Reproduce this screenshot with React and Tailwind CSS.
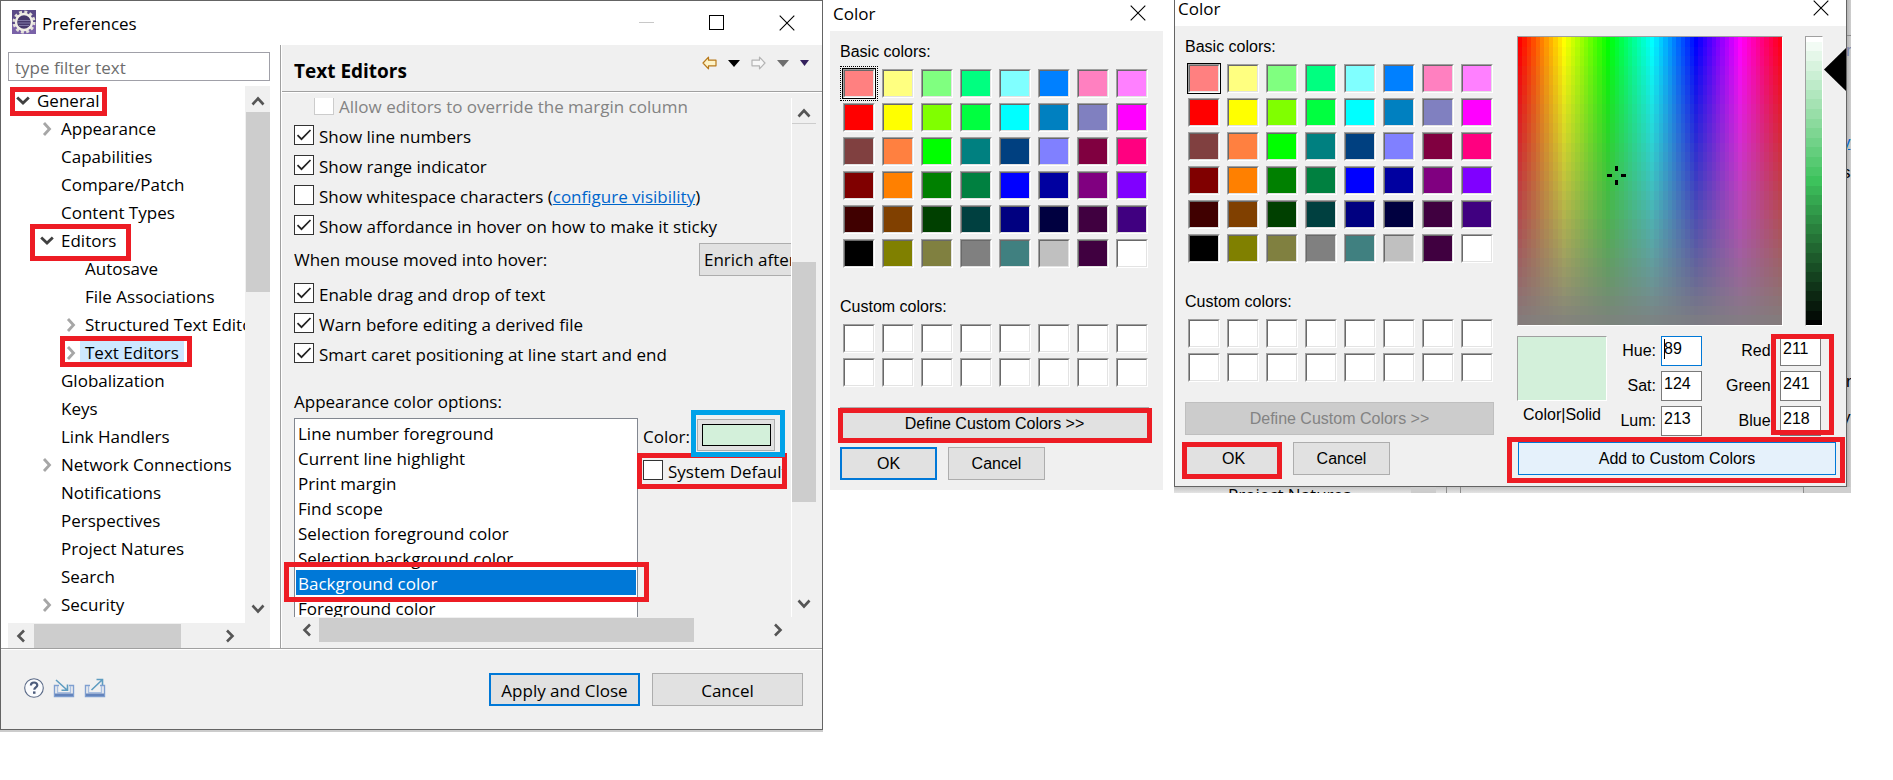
import React from 'react';
import clsx from 'clsx';

const TREE = [
  { label: 'General', level: 0, state: 'open', mark: 'left-[2px] top-0 w-[97px] h-[29px]' },
  { label: 'Appearance', level: 1, state: 'closed' },
  { label: 'Capabilities', level: 1 },
  { label: 'Compare/Patch', level: 1 },
  { label: 'Content Types', level: 1 },
  { label: 'Editors', level: 1, state: 'open', mark: 'left-[22px] -top-[3px] w-[101px] h-[37px]' },
  { label: 'Autosave', level: 2 },
  { label: 'File Associations', level: 2 },
  { label: 'Structured Text Editors', level: 2, state: 'closed' },
  { label: 'Text Editors', level: 2, state: 'closed', selected: true, mark: 'left-[52px] -top-[3px] w-[132px] h-[31px]' },
  { label: 'Globalization', level: 1 },
  { label: 'Keys', level: 1 },
  { label: 'Link Handlers', level: 1 },
  { label: 'Network Connections', level: 1, state: 'closed' },
  { label: 'Notifications', level: 1 },
  { label: 'Perspectives', level: 1 },
  { label: 'Project Natures', level: 1 },
  { label: 'Search', level: 1 },
  { label: 'Security', level: 1, state: 'closed' },
];

const INDENT = ['pl-[8px]', 'pl-[32px]', 'pl-[56px]'];

const COLOR_OPTIONS = [
  'Line number foreground',
  'Current line highlight',
  'Print margin',
  'Find scope',
  'Selection foreground color',
  'Selection background color',
  'Background color',
  'Foreground color',
];

const BASIC_COLORS = [
  '#ff8080', '#ffff80', '#80ff80', '#00ff80', '#80ffff', '#0080ff', '#ff80c0', '#ff80ff',
  '#ff0000', '#ffff00', '#80ff00', '#00ff40', '#00ffff', '#0080c0', '#8080c0', '#ff00ff',
  '#804040', '#ff8040', '#00ff00', '#008080', '#004080', '#8080ff', '#800040', '#ff0080',
  '#800000', '#ff8000', '#008000', '#008040', '#0000ff', '#0000a0', '#800080', '#8000ff',
  '#400000', '#804000', '#004000', '#004040', '#000080', '#000040', '#400040', '#400080',
  '#000000', '#808000', '#808040', '#808080', '#408080', '#c0c0c0', '#400040', '#ffffff',
];

const CUSTOM_COLORS = Array(16).fill('#ffffff');

const Mark = ({ className, blue }) => (
  <span
    className={clsx(
      'absolute z-10 border-[5px] pointer-events-none',
      blue ? 'border-[#00a2e8]' : 'border-[#ed1c24]',
      className
    )}
  />
);

const CloseIcon = () => (
  <svg className="w-4 h-4" viewBox="0 0 16 16" fill="none" stroke="#000" strokeWidth="1.1">
    <path d="M.7.7l14.6 14.6M15.3.7L.7 15.3" />
  </svg>
);

const EclipseIcon = () => (
  <svg className="w-6 h-6" viewBox="0 0 24 24">
    <rect width="24" height="24" fill="#5a4a86" />
    <rect y="14" width="24" height="10" fill="#7a62a8" />
    <circle cx="12" cy="12" r="10" fill="none" stroke="#e4e2da" strokeWidth="3" strokeDasharray="2.9 2.34" />
    <circle cx="12" cy="12" r="8" fill="#46386c" stroke="#f0eee6" strokeWidth="2.4" />
    <path d="M6 10.5h12M5.6 13h12.8M7 15.5h10" stroke="#7f78a6" strokeWidth="1" />
  </svg>
);

const Arrow = ({ dir }) => {
  const paths = {
    up: 'M1.5 10.5L7 4.5l5.5 6',
    down: 'M1.5 3.5L7 9.5l5.5-6',
    left: 'M10 1.5L4.5 7l5.5 5.5',
    right: 'M4 1.5L9.5 7 4 12.5',
  };
  return (
    <svg className="w-[14px] h-[14px]" viewBox="0 0 14 14" fill="none" stroke="#555" strokeWidth="2.6">
      <path d={paths[dir]} />
    </svg>
  );
};

const Chevron = ({ open }) => (
  <svg className="w-[14px] h-[14px]" viewBox="0 0 14 14" fill="none" strokeWidth="2.8">
    {open ? <path d="M1.2 3.5L7 9l5.8-5.5" stroke="#404040" /> : <path d="M4 1l5.5 6L4 13" stroke="#a6a6a6" />}
  </svg>
);

const Caret = ({ color, small }) => (
  <svg className={small ? 'w-[9px] h-[6px]' : 'w-[12px] h-[7px]'} viewBox="0 0 12 7" preserveAspectRatio="none">
    <path d="M0 0h12L6 7z" fill={color} />
  </svg>
);

const BlockArrow = ({ stroke, fill, flip }) => (
  <svg className="w-[15px] h-[14px]" viewBox="0 0 15 14" fill={fill} stroke={stroke} strokeWidth="1.2" strokeLinejoin="round">
    <path d={flip ? 'M14 7L8.5 1.2v3H1v5.6h7.5v3z' : 'M1 7l5.5-5.8v3H14v5.6H6.5v3z'} />
  </svg>
);

const Check = ({ label, checked, disabled, className, children }) => (
  <div className={clsx('flex items-center h-[30px]', className)}>
    <label className={clsx('flex items-center whitespace-nowrap', disabled && 'text-[#838383]')}>
      <span className="relative flex w-5 h-5 mr-[5px]">
        <input
          type="checkbox"
          defaultChecked={checked}
          disabled={disabled}
          className={clsx(
            'appearance-none w-5 h-5 bg-white border',
            disabled ? 'border-[#cccccc]' : 'border-[#333333]'
          )}
        />
        {checked && (
          <svg className="absolute left-0 top-0 w-5 h-5 pointer-events-none" viewBox="0 0 20 20" fill="none" stroke="#222" strokeWidth="1.7">
            <path d="M3.5 10.2l4 4L16.5 5" />
          </svg>
        )}
      </span>
      <span className="pt-[3px]">{label}</span>
    </label>
    {children}
  </div>
);

const PushButton = ({ primary, className, children, ...rest }) => (
  <button
    type="button"
    className={clsx(
      'flex items-center justify-center h-[33px] bg-[#e1e1e1]',
      primary ? 'border-2 border-[#0078d7]' : 'border border-[#adadad]',
      className
    )}
    {...rest}
  >
    {children}
  </button>
);

const PreferenceTree = () => (
  <aside className="w-[280px] shrink-0 flex flex-col bg-white border-r border-[#a0a0a0] pl-[7px] pr-[10px] pt-[7px]">
    <input
      type="text"
      aria-label="Filter preferences"
      placeholder="type filter text"
      className="w-full h-[29px] px-[6px] pt-px border border-[#a0a0a8] placeholder:text-[#6d6d6d] outline-none"
    />
    <div className="flex mt-[5px]">
      <div className="flex-1 min-w-0">
        <ul role="tree" aria-label="Preference pages" className="h-[537px] pt-px overflow-hidden">
          {TREE.map((item) => (
            <li
              key={item.label}
              role="treeitem"
              aria-selected={!!item.selected}
              className={clsx('relative flex items-center h-7 whitespace-nowrap', INDENT[item.level])}
            >
              <span className="flex w-[14px] shrink-0">{item.state && <Chevron open={item.state === 'open'} />}</span>
              <span className={clsx('ml-[2px] px-[5px] h-7 leading-7', item.selected && 'bg-[#cde8ff]')}>{item.label}</span>
              {item.mark && <Mark className={item.mark} />}
            </li>
          ))}
        </ul>
        <div className="flex items-center h-[25px] bg-[#f0f0f0]">
          <button type="button" aria-label="Scroll left" className="w-[26px] flex justify-center"><Arrow dir="left" /></button>
          <span className="w-[147px] h-6 bg-[#cdcdcd]" />
          <button type="button" aria-label="Scroll right" className="ml-auto w-[30px] flex justify-center"><Arrow dir="right" /></button>
        </div>
      </div>
      <div className="w-[25px] flex flex-col items-center bg-[#f0f0f0] pb-[26px]">
        <button type="button" aria-label="Scroll up" className="h-[26px] flex items-center pt-1"><Arrow dir="up" /></button>
        <span className="w-6 h-[180px] bg-[#cdcdcd]" />
        <button type="button" aria-label="Scroll down" className="mt-auto h-[26px] flex items-center"><Arrow dir="down" /></button>
      </div>
    </div>
  </aside>
);

const ColorOptions = () => (
  <div className="flex items-start mt-1">
    <ul role="listbox" aria-label="Appearance color options" className="w-[344px] shrink-0 bg-white border border-[#828790] p-px">
      {COLOR_OPTIONS.map((name) => {
        const selected = name === 'Background color';
        return (
          <li
            key={name}
            role="option"
            aria-selected={selected}
            className={clsx('relative h-[25px] leading-[27px] pl-[2px]', selected && 'bg-[#0078d7] text-white')}
          >
            {name}
            {selected && <Mark className="-left-[12px] -top-[8px] w-[365px] h-[40px]" />}
          </li>
        );
      })}
    </ul>
    <div className="ml-[5px] w-[144px] shrink-0">
      <div className="flex items-center mt-px">
        <span className="w-[54px] pt-[3px]">Color:</span>
        <button type="button" aria-label="Background color" className="relative z-20 flex items-center justify-center w-[78px] h-8 bg-[#e1e1e1] border border-[#adadad]">
          <span className="w-[69px] h-[22px] bg-[#d3f0da] border border-black" />
          <Mark blue className="-left-[7px] -top-[10px] w-[94px] h-[47px]" />
        </button>
      </div>
      <div className="relative mt-1">
        <Check label="System Default" className="w-[140px] overflow-hidden" />
        <Mark className="-left-[6px] -top-[2px] w-[150px] h-[36px]" />
      </div>
    </div>
  </div>
);

const TextEditorsPage = () => (
  <div className="flex-1 min-w-0 flex flex-col border-l border-white">
    <header className="flex justify-between h-[47px] pl-3 pr-[13px] border-b border-[#a0a0a0]">
      <h2 className="pt-[14px] text-[19px] leading-6 font-bold">Text Editors</h2>
      <div className="flex items-center gap-[11px] h-9">
        <button type="button" aria-label="Back"><BlockArrow stroke="#b8791a" fill="#fdf3c8" /></button>
        <button type="button" aria-label="Back history"><Caret color="#000" /></button>
        <button type="button" aria-label="Forward"><BlockArrow stroke="#b4b4b4" fill="#f7f7f7" flip /></button>
        <button type="button" aria-label="Forward history"><Caret color="#6e6e6e" /></button>
        <button type="button" aria-label="View menu"><Caret color="#33205c" small /></button>
      </div>
    </header>
    <div className="flex border-t border-white pt-[5px] pb-[6px] pr-[6px]">
      <div className="flex-1 min-w-0">
        <div className="h-[519px] pl-3 overflow-hidden border-r border-white">
          <div className="-mt-2">
            <Check label="Allow editors to override the margin column" disabled className="pl-5" />
            <Check label="Show line numbers" checked />
            <Check label="Show range indicator" checked />
            <Check label="Show whitespace characters (">
              <a href="#whitespace" className="pt-[3px] text-[#0066cc] underline">configure visibility</a>
              <span className="pt-[3px]">)</span>
            </Check>
            <Check label="Show affordance in hover on how to make it sticky" checked />
          </div>
          <div className="flex items-center justify-between mt-[3px]">
            <label htmlFor="hover-mode" className="pt-px">When mouse moved into hover:</label>
            <select
              id="hover-mode"
              className="appearance-none shrink-0 w-[160px] -mr-[68px] h-[33px] pl-1 pt-px bg-[#e1e1e1] border border-[#adadad]"
            >
              <option>Enrich after</option>
            </select>
          </div>
          <div className="mt-[2px]">
            <Check label="Enable drag and drop of text" checked />
            <Check label="Warn before editing a derived file" checked />
            <Check label="Smart caret positioning at line start and end" checked />
          </div>
          <p className="mt-[22px] leading-6">Appearance color options:</p>
          <ColorOptions />
        </div>
        <div className="flex items-center mt-px ml-3 h-6">
          <button type="button" aria-label="Scroll left" className="w-[25px] flex justify-center"><Arrow dir="left" /></button>
          <span className="w-[375px] h-6 bg-[#cdcdcd]" />
          <button type="button" aria-label="Scroll right" className="ml-auto w-[29px] flex justify-center"><Arrow dir="right" /></button>
        </div>
      </div>
      <div className="w-6 flex flex-col items-center pb-[25px]">
        <button type="button" aria-label="Scroll up" className="w-6 h-[26px] flex items-center justify-center pt-1 border-b border-[#cdcdcd]"><Arrow dir="up" /></button>
        <span className="mt-[138px] w-6 h-[240px] bg-[#cdcdcd]" />
        <button type="button" aria-label="Scroll down" className="mt-auto h-[26px] flex items-center"><Arrow dir="down" /></button>
      </div>
    </div>
  </div>
);

const PreferencesWindow = () => (
  <div className="border-b-2 border-[#cccccc]">
    <section className="border border-[#646464] bg-[#f0f0f0] text-[17px] leading-6">
      <header className="flex items-center h-11 pl-[11px] pr-[27px] bg-white">
        <span className="pb-[2px]"><EclipseIcon /></span>
        <h1 className="ml-[6px] pt-px">Preferences</h1>
        <div className="ml-auto flex items-center gap-[55px] pb-px">
          <button type="button" aria-label="Minimize" disabled><span className="block w-[15px] h-px bg-[#c8c8c8]" /></button>
          <button type="button" aria-label="Maximize"><span className="block w-[15px] h-[15px] border border-black" /></button>
          <button type="button" aria-label="Close"><CloseIcon /></button>
        </div>
      </header>
      <div className="flex">
        <PreferenceTree />
        <TextEditorsPage />
      </div>
      <footer className="border-t border-[#a0a0a0]">
        <div className="flex items-start justify-end pt-[23px] pb-[23px] pl-[23px] pr-[19px] border-t border-white">
          <div className="flex items-center gap-[9px] mr-auto h-[29px]">
            <button type="button" aria-label="Help">
              <svg className="w-5 h-5" viewBox="0 0 20 20" fill="none">
                <circle cx="10" cy="10" r="9.3" fill="#fafbfd" stroke="#5b6b88" strokeWidth="1.1" />
                <path d="M6.9 7.6c0-2 1.3-3.1 3.2-3.1s3.2 1.1 3.2 2.7c0 2.1-3 2.300-3 4.600" stroke="#4c5c7c" strokeWidth="2.2" />
                <rect x="9" y="13.4" width="2.5" height="2.4" fill="#4c5c7c" />
              </svg>
            </button>
            <button type="button" aria-label="Import">
              <svg className="w-[22px] h-5" viewBox="0 0 22 20" fill="none">
                <path d="M6 7.500H1.500v11h19v-11H16" stroke="#7f9fd0" strokeWidth="1.400" />
                <path d="M4.500 8v6.800h13V8" stroke="#a9bfe0" strokeWidth="1.400" />
                <path d="M2 16.800h18" stroke="#6484bc" strokeWidth="2.600" />
                <path d="M3 2l10.500 9.500M14.500 6.500v5.800H8.500" stroke="#5e9cc0" strokeWidth="1.600" />
              </svg>
            </button>
            <button type="button" aria-label="Export">
              <svg className="w-[22px] h-5" viewBox="0 0 22 20" fill="none">
                <path d="M6 7.500H1.500v11h19v-11H16" stroke="#7f9fd0" strokeWidth="1.400" />
                <path d="M4.500 8v6.800h13V8" stroke="#a9bfe0" strokeWidth="1.400" />
                <path d="M2 16.800h18" stroke="#6484bc" strokeWidth="2.600" />
                <path d="M7.500 12L18 2M12.500 1.500h6V7" stroke="#5e9cc0" strokeWidth="1.600" />
              </svg>
            </button>
          </div>
          <PushButton primary className="w-[151px] pt-[2px]">Apply and Close</PushButton>
          <PushButton className="ml-3 w-[151px] pt-[2px]">Cancel</PushButton>
        </div>
      </footer>
    </section>
  </div>
);

const Swatch = ({ color, selected, focused }) => (
  <button
    type="button"
    aria-label={color}
    className={clsx(
      'w-8 h-[29px] border border-t-[#a0a0a0] border-l-[#a0a0a0] border-r-white border-b-white',
      selected && 'ring-1 ring-black',
      focused && 'outline-1 outline-dotted outline-black outline-offset-2'
    )}
  >
    <span
      className="block w-full h-full border border-t-[#696969] border-l-[#696969] border-r-[#e3e3e3] border-b-[#e3e3e3]"
      style={{ backgroundColor: color }}
    />
  </button>
);

const Palette = ({ label, colors, focused }) => (
  <div>
    <p className="h-[22px]">{label}</p>
    <div className="grid grid-cols-[repeat(8,32px)] gap-x-[7px] gap-y-[5px] mt-[6px] ml-[3px]">
      {colors.map((color, i) => (
        <Swatch key={i} color={color} selected={color === '#ff8080'} focused={focused && i === 0} />
      ))}
    </div>
  </div>
);

const DialogTitle = () => (
  <div className="flex items-center h-[31px] pl-[3px] pr-[17px] pb-[6px] bg-white text-[17px]">
    <h2 className="pt-[2px]">Color</h2>
    <button type="button" aria-label="Close" className="ml-auto"><CloseIcon /></button>
  </div>
);

const PalettePanel = ({ expanded }) => (
  <div className={clsx('w-[319px] shrink-0 pl-[10px] pt-[10px]', expanded ? 'pb-[11px]' : 'pb-[10px]')}>
    <Palette label="Basic colors:" colors={BASIC_COLORS} focused={!expanded} />
    <div className="mt-7">
      <Palette label="Custom colors:" colors={CUSTOM_COLORS} />
    </div>
    <div className="relative mt-5">
      <PushButton disabled={expanded} className={clsx('w-[309px]', expanded && 'bg-[#cccccc]! border-[#bfbfbf]! text-[#838383]')}>
        Define Custom Colors &gt;&gt;
      </PushButton>
      {!expanded && <Mark className="-left-[2px] top-px w-[314px] h-[35px]" />}
    </div>
    <div className="flex gap-[11px] mt-[7px]">
      <div className="relative">
        <PushButton primary={!expanded} className="w-[97px]">OK</PushButton>
        {expanded && <Mark className="-left-[3px] top-0 w-[100px] h-[37px]" />}
      </div>
      <PushButton className="w-[97px]">Cancel</PushButton>
    </div>
  </div>
);

const HUES = 60;
const STEPS = 30;

const Spectrum = () => {
  const cells = [];
  for (let y = 0; y < STEPS; y++) {
    for (let x = 0; x < HUES; x++) {
      cells.push(
        <rect key={`${x}-${y}`} x={x} y={y} width="1" height="1" fill={`hsl(${x * 6} ${100 - (y * 100) / STEPS}% 50%)`} />
      );
    }
  }
  return (
    <div className="relative flex-1 h-[290px] border border-t-[#a0a0a0] border-l-[#a0a0a0] border-r-white border-b-white">
      <svg className="block w-full h-full" viewBox={`0 0 ${HUES} ${STEPS}`} preserveAspectRatio="none" shapeRendering="crispEdges">
        {cells}
      </svg>
      <svg className="absolute left-[89px] top-[129px] w-[19px] h-[19px]" viewBox="0 0 19 19">
        <path d="M8 0h3v5H8zM8 14h3v5H8zM0 8h5v3H0zM14 8h5v3h-5z" />
      </svg>
    </div>
  );
};

const Luminance = () => (
  <svg
    className="ml-[22px] w-[18px] h-[290px] border border-t-[#a0a0a0] border-l-[#a0a0a0] border-r-white border-b-white"
    viewBox="0 0 1 30"
    preserveAspectRatio="none"
    shapeRendering="crispEdges"
  >
    {Array.from({ length: STEPS + 1 }, (_, i) => (
      <rect key={i} x="0" y={i - 0.5} width="1" height="1" fill={`hsl(134 52% ${100 - (i * 100) / STEPS}%)`} />
    ))}
  </svg>
);

const NumberField = ({ label, value, active }) => (
  <label className="flex items-start justify-end gap-[5px] h-[30px]">
    <span className="pt-[4px]">{label}</span>
    <input
      type="text"
      defaultValue={value}
      className={clsx(
        'w-[41px] h-[30px] pl-[2px] pb-[5px] bg-white border outline-none',
        active ? 'border-[#0078d7]' : 'border-[#7a7a7a]'
      )}
    />
  </label>
);

const CustomColorPanel = () => (
  <div className="flex-1 min-w-0 ml-[23px] pt-[10px]">
    <div className="flex items-start">
      <Spectrum />
      <Luminance />
      <svg className="ml-px mt-3 w-[22px] h-[43px]" viewBox="0 0 22 43">
        <path d="M22 0v43L0 21.5z" />
      </svg>
    </div>
    <div className="flex mt-[10px]">
      <div className="w-[90px]">
        <div className="h-[65px] bg-[#d3f0da] border border-t-[#a0a0a0] border-l-[#a0a0a0] border-r-white border-b-white" />
        <p className="mt-[3px] text-center">Color|Solid</p>
      </div>
      <div className="relative w-[95px] flex flex-col gap-[5px]">
        <NumberField label="Hue:" value="89" active />
        <NumberField label="Sat:" value="124" />
        <NumberField label="Lum:" value="213" />
        <span className="absolute left-[57px] top-[3px] w-px h-5 bg-black" />
      </div>
      <div className="relative w-[119px] flex flex-col gap-[5px]">
        <NumberField label="Red:" value="211" />
        <NumberField label="Green:" value="241" />
        <NumberField label="Blue:" value="218" />
        <Mark className="right-[-13px] -top-[2px] w-[63px] h-[101px]" />
      </div>
    </div>
    <div className="relative mt-[6px] ml-px mr-[10px]">
      <PushButton className="w-full bg-[#e5f1fb]! border-[#0078d7]!">Add to Custom Colors</PushButton>
      <Mark className="-left-[11px] -right-[9px] -top-[5px] h-[46px]" />
    </div>
  </div>
);

const ColorDialog = () => (
  <section className="pl-[7px] pr-[11px] text-base leading-[22px]">
    <DialogTitle />
    <div className="bg-[#f0f0f0]">
      <PalettePanel />
    </div>
  </section>
);

// Right and bottom slivers of the preferences window that stay visible behind the dialog
const BehindRight = () => (
  <div className="w-[4px] overflow-hidden bg-linear-to-r from-[#b4b4b4] to-[#cfcfcf] text-[17px] leading-[30px]">
    <div className="h-[36px] border-b border-[#8c8c8c]" />
    <span className="block -ml-px h-[32px] text-[#7d86a8]">r</span>
    <span className="block -ml-[5px] mt-[60px] h-[30px] text-[#0066cc] underline">y</span>
    <span className="block -ml-[5px] h-[28px]">s</span>
    <span className="block -ml-px mt-[181px] h-[30px]">r</span>
    <span className="block -ml-[5px] mt-[6px] h-[30px]">y</span>
  </div>
);

const BehindBottom = () => (
  <div className="flex h-[6px] overflow-hidden bg-linear-to-b from-[#c4c4c4] to-[#e4e4e4] font-['Open_Sans','Noto_Sans',sans-serif] text-[17px] leading-[16px]">
    <span className="w-[237px] pl-[54px] whitespace-nowrap">Project Natures</span>
    <span className="w-[25px] bg-[#cccccc]" />
    <span className="w-[11px] border-r border-[#8c8c8c]" />
    <span className="w-[14px] border-r border-[#8c8c8c]" />
    <span className="w-[343px] border-r border-[#8c8c8c]" />
    <span className="flex-1 bg-[#cfcfcf]" />
  </div>
);

const ExpandedColorDialog = () => (
  <div>
    <div className="flex">
      <section className="flex-1 min-w-0 border-x border-b border-[#646464] bg-[#f0f0f0] text-base leading-[22px]">
        <div className="h-[26px] overflow-hidden">
          <div className="-mt-[5px]">
            <DialogTitle />
          </div>
        </div>
        <div className="flex">
          <PalettePanel expanded />
          <CustomColorPanel />
        </div>
      </section>
      <BehindRight />
    </div>
    <BehindBottom />
  </div>
);

const App = () => (
  <main className="grid grid-cols-[823fr_351fr_677fr_42fr] items-start min-h-screen bg-white text-black font-['Open_Sans','Noto_Sans',sans-serif]">
    <PreferencesWindow />
    <div className="font-['Liberation_Sans',Arial,sans-serif] [&_h2]:font-['Open_Sans','Noto_Sans',sans-serif]">
      <ColorDialog />
    </div>
    <div className="font-['Liberation_Sans',Arial,sans-serif] [&_h2]:font-['Open_Sans','Noto_Sans',sans-serif]">
      <ExpandedColorDialog />
    </div>
  </main>
);

export default App;
